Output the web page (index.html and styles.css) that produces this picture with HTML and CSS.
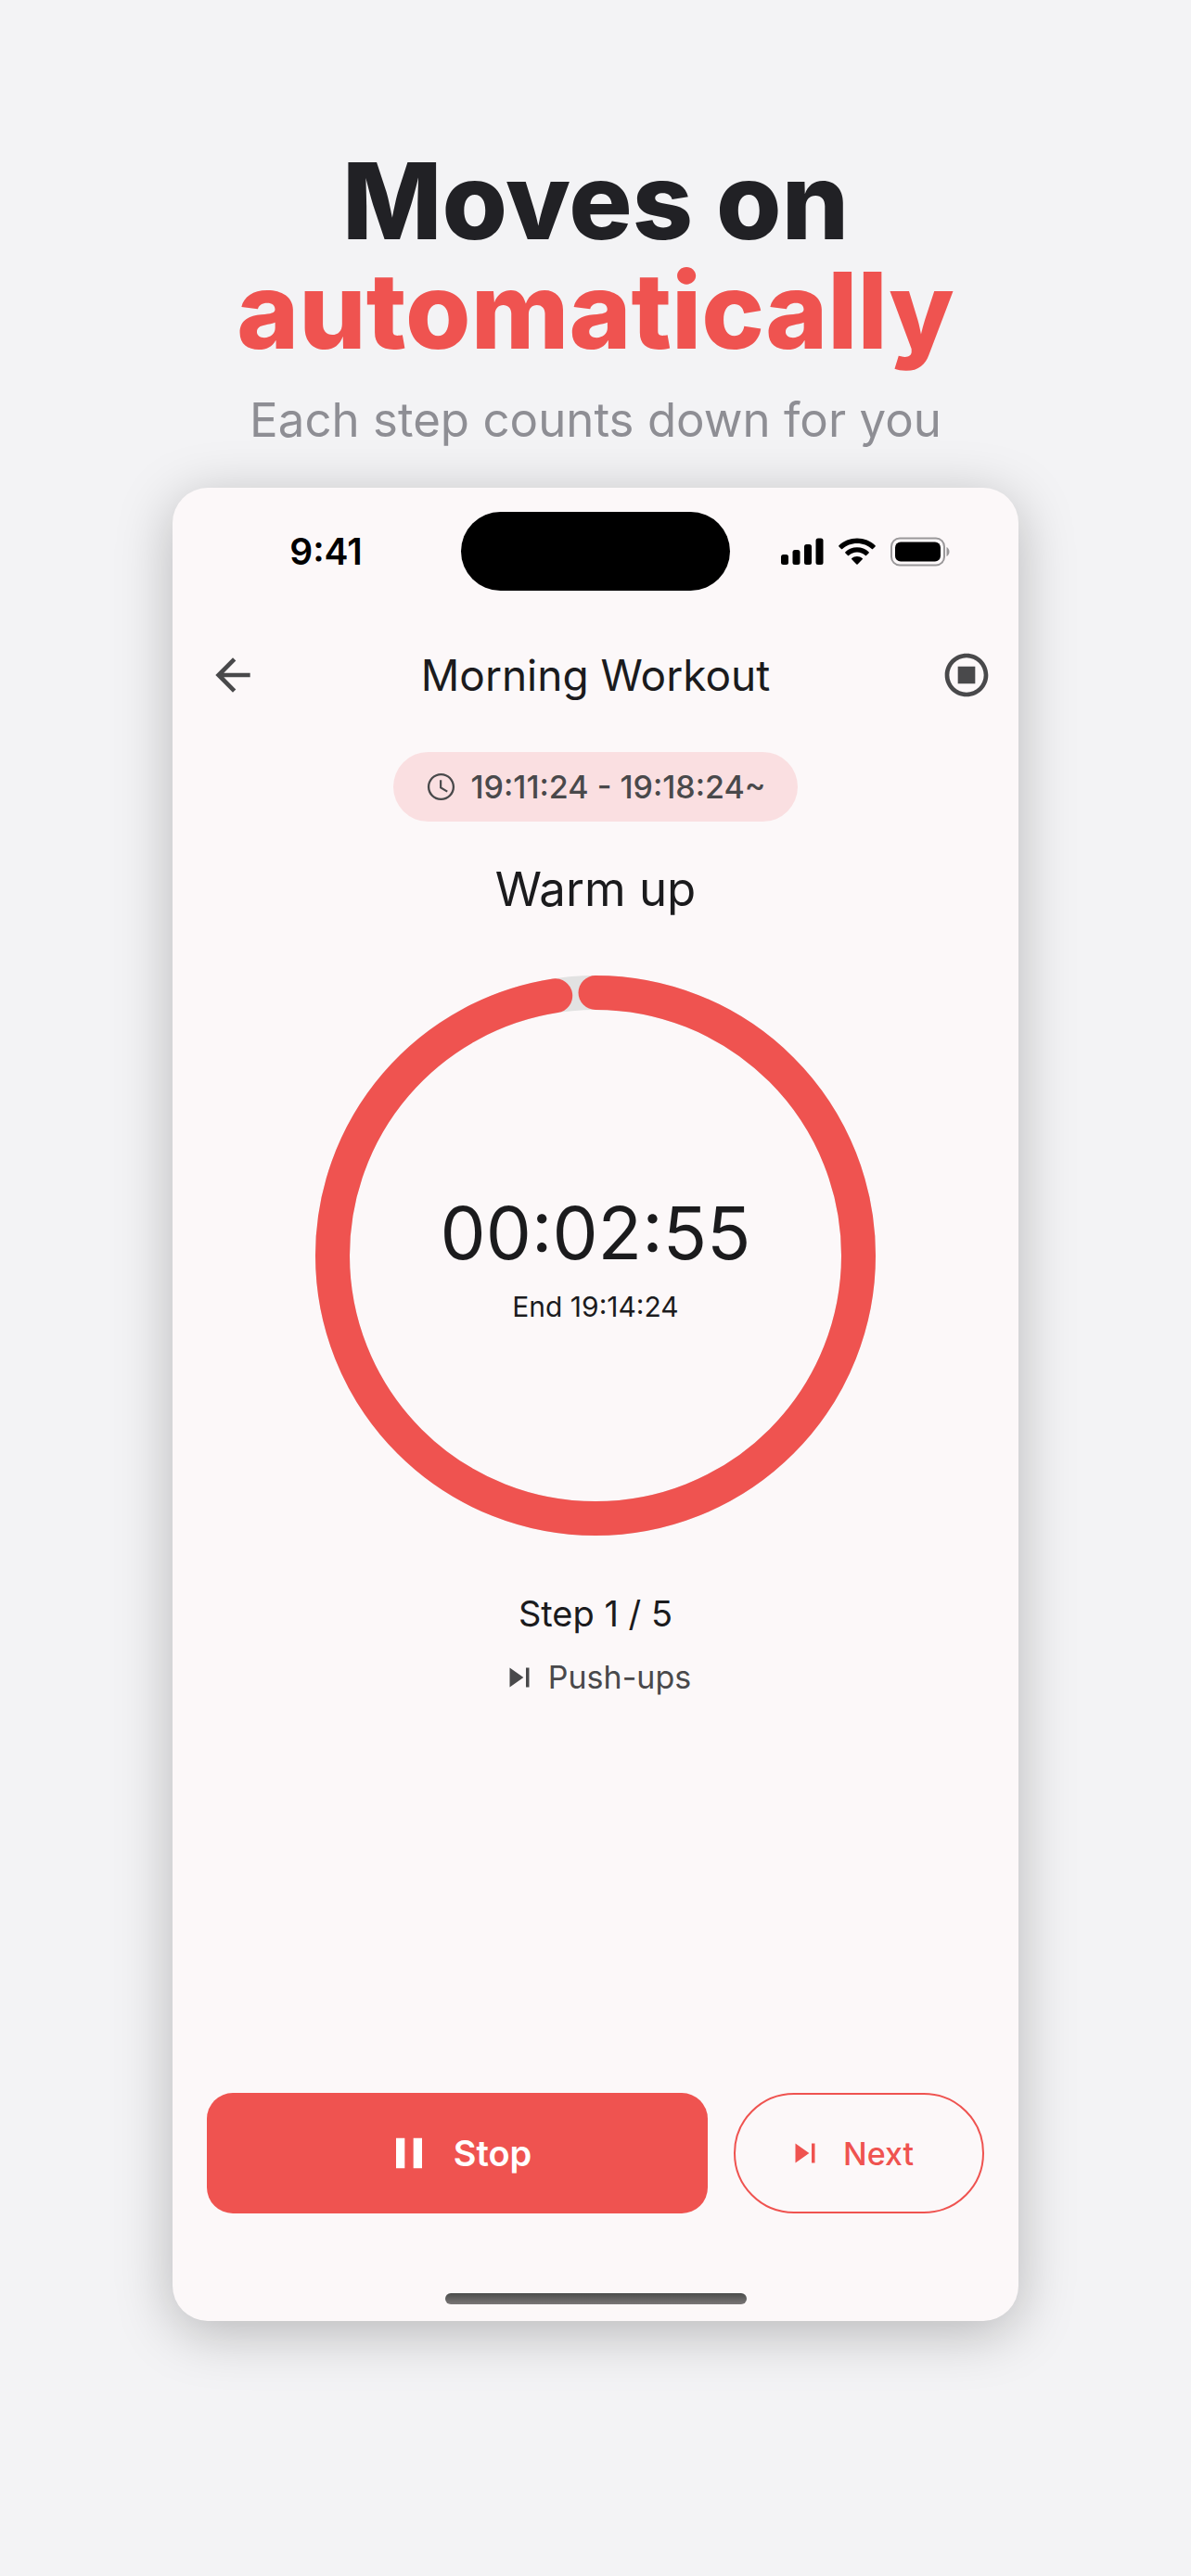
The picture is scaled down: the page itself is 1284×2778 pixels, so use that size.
FILE: index.html
```html
<!DOCTYPE html>
<html lang="en">
<head>
  <meta charset="UTF-8" />
  <meta name="viewport" content="width=device-width, initial-scale=1.0"/>
  <title>Interval Timer</title>
  <link rel="stylesheet" href="styles.css">
</head>
<body>

  <!-- Headline -->
  <header class="headline">
    <h1>Moves on<br><span class="accent">automatically</span></h1>
    <p>Each step counts down for you</p>
  </header>

  <!-- Phone -->
  <main class="phone">

    <!-- Status bar -->
    <div class="status-bar">
      <span class="clock">9:41</span>
      <div class="island"></div>
      <div class="status-icons">
        <svg width="46" height="30" viewBox="0 0 46 30">
          <rect x="0" y="18" width="8" height="11" rx="2.5"/>
          <rect x="12.5" y="13" width="8" height="16" rx="2.5"/>
          <rect x="25" y="7" width="8" height="22" rx="2.5"/>
          <rect x="37.5" y="0.5" width="8" height="28.5" rx="2.5"/>
        </svg>
        <svg width="40" height="30" viewBox="0 0 40 30">
          <path d="M20 0.5C12.300 0.5 5.200 3.500 0.400 8.300a.8.8 0 0 0 0 1.100l2.600 2.600a.8.8 0 0 0 1.100 0C8.200 8.100 13.800 5.900 20 5.900s11.800 2.200 15.900 6.100a.8.8 0 0 0 1.100 0l2.600-2.600a.8.8 0 0 0 0-1.100C34.800 3.500 27.700 0.500 20 0.500z"/>
          <path d="M20 10.300c-4.900 0-9.300 1.900-12.600 4.900a.8.8 0 0 0 0 1.200l2.600 2.600a.8.8 0 0 0 1.100 0c2.400-2.100 5.500-3.400 8.900-3.400s6.500 1.300 8.900 3.400a.8.8 0 0 0 1.100 0l2.600-2.600a.8.8 0 0 0 0-1.200c-3.300-3-7.700-4.900-12.600-4.900z"/>
          <path d="M20 20c-2.200 0-4.200.8-5.700 2.100a.8.8 0 0 0 0 1.200l5.100 5.200a.8.8 0 0 0 1.200 0l5.100-5.200a.8.8 0 0 0 0-1.200C24.200 20.800 22.200 20 20 20z"/>
        </svg>
        <svg width="64" height="32" viewBox="0 0 64 32">
          <rect x="1" y="1.500" width="57" height="29" rx="9" fill="none" stroke="#9a989a" stroke-width="2"/>
          <rect x="5" y="5.500" width="49" height="21" rx="6"/>
          <path d="M60.500 11v10c1.700-.8 3-2.700 3-5s-1.300-4.200-3-5z" fill="#9a989a"/>
        </svg>
      </div>
    </div>

    <!-- App bar -->
    <div class="app-bar">
      <button type="button" class="icon-button back" aria-label="Back">
        <svg width="56" height="56" viewBox="0 0 24 24"><path d="M20 11H7.830l5.590-5.590L12 4l-8 8 8 8 1.410-1.410L7.830 13H20v-2z"/></svg>
      </button>
      <h2>Morning Workout</h2>
      <button type="button" class="icon-button finish" aria-label="Finish workout">
        <svg width="56" height="56" viewBox="0 0 24 24"><path d="M12 2C6.480 2 2 6.480 2 12s4.480 10 10 10 10-4.480 10-10S17.520 2 12 2zm0 18c-4.420 0-8-3.580-8-8s3.580-8 8-8 8 3.580 8 8-3.580 8-8 8zM8 8h8v8H8z"/></svg>
      </button>
    </div>

    <!-- Current step -->
    <section class="session">
      <div class="time-chip">
        <svg width="35" height="35" viewBox="0 0 24 24"><path d="M11.990 2C6.470 2 2 6.480 2 12s4.470 10 9.990 10C17.520 22 22 17.520 22 12S17.520 2 11.990 2zM12 20.400c-4.640 0-8.400-3.760-8.400-8.400s3.760-8.400 8.400-8.400 8.400 3.760 8.400 8.400-3.760 8.400-8.400 8.400zM12.500 7H11v6l5.250 3.150.75-1.230-4.500-2.670z"/></svg>
        <span>19:11:24 - 19:18:24~</span>
      </div>

      <h3>Warm up</h3>

      <div class="ring">
        <svg class="ring-dial" viewBox="0 0 604 604">
          <circle class="ring-track" cx="302" cy="302" r="283.500"/>
          <circle class="ring-progress" cx="302" cy="302" r="283.500" pathLength="360" stroke-dasharray="351.200 360" transform="rotate(-90 302 302)"/>
        </svg>
        <div class="ring-label">
          <span class="remaining">00:02:55</span>
          <span class="end-time">End 19:14:24</span>
        </div>
      </div>

      <p class="step-count">Step 1 / 5</p>
      <p class="next-step">
        <svg width="42" height="42" viewBox="0 0 24 24"><path d="M6 18l8.500-6L6 6v12zM16 6v12h2V6h-2z"/></svg>
        <span>Push-ups</span>
      </p>
    </section>

    <!-- Controls -->
    <div class="actions">
      <button type="button" class="btn btn-stop">
        <svg width="56" height="56" viewBox="0 0 24 24"><path d="M6 19h4V5H6v14zm8-14v14h4V5h-4z"/></svg>
        Stop
      </button>
      <button type="button" class="btn btn-next">
        <svg width="42" height="42" viewBox="0 0 24 24"><path d="M6 18l8.500-6L6 6v12zM16 6v12h2V6h-2z"/></svg>
        Next
      </button>
    </div>

    <div class="home-indicator"></div>
  </main>

</body>
</html>
```
FILE: styles.css
```css
* {
  box-sizing: border-box;
}
body {
  margin: 0;
  min-height: 100vh;
  padding: 158px 24px 40px;
  font-family: Inter, "Liberation Sans", sans-serif;
  background-color: #f3f3f5;
  color: #1b1b1d;
}

h1, h2, h3, p {
  margin: 0;
}

svg {
  display: block;
  flex: none;
  fill: currentColor;
}

button {
  font-family: inherit;
  border: none;
  background: none;
  padding: 0;
  cursor: pointer;
}

/* Headline */
.headline {
  text-align: center;
}
.headline h1 {
  font-size: 114px;
  line-height: 118px;
  font-weight: 800;
  color: #212125;
}
.headline .accent {
  color: #ef5350;
}
.headline p {
  margin-top: 28px;
  font-size: 51px;
  line-height: 62px;
  color: #8e8e94;
}

/* Phone */
.phone {
  max-width: 912px;
  margin: 42px auto 0;
  padding: 26px 0 18px;
  background-color: #fcf8f9;
  border-radius: 38px;
  box-shadow: 0 12px 60px rgba(0,0,0,0.25);
}

.status-bar {
  display: grid;
  grid-template-columns: 1fr 290px 1fr;
  align-items: center;
  padding: 0 20px;
  color: #000;
}
.clock {
  text-align: center;
  font-size: 39px;
  line-height: 48px;
  font-weight: 600;
}
.island {
  height: 85px;
  background-color: #000;
  border-radius: 43px;
}
.status-icons {
  display: flex;
  justify-content: center;
  align-items: center;
  gap: 16px;
}

.app-bar {
  display: grid;
  grid-template-columns: 1fr auto 1fr;
  align-items: center;
  height: 88px;
  margin-top: 47px;
  padding: 0 28px;
}
.app-bar h2 {
  font-size: 46px;
  font-weight: 400;
}
.icon-button {
  display: flex;
  justify-content: center;
  color: #49494b;
}
.back {
  width: 74px;
}
.finish {
  justify-self: end;
}

/* Current step */
.session {
  display: flex;
  flex-direction: column;
  align-items: center;
  padding: 39px 28px 0;
}
.time-chip {
  display: flex;
  align-items: center;
  gap: 14px;
  height: 75px;
  padding: 0 34px;
  border-radius: 38px;
  background-color: #fadfe1;
  color: #49494b;
  font-size: 34px;
  font-weight: 500;
}
.session h3 {
  margin-top: 37px;
  font-size: 51px;
  line-height: 72px;
  font-weight: 400;
}

.ring {
  display: grid;
  place-items: center;
  width: 100%;
  max-width: 604px;
  margin-top: 57px;
}
.ring-dial, .ring-label {
  grid-area: 1 / 1;
}
.ring-dial {
  width: 100%;
}
.ring-track, .ring-progress {
  fill: none;
  stroke-width: 37;
}
.ring-track {
  stroke: #e2e2e2;
}
.ring-progress {
  stroke: #ef5350;
  stroke-linecap: round;
}
.ring-label {
  display: flex;
  flex-direction: column;
  align-items: center;
  gap: 14px;
  padding-top: 6px;
}
.remaining {
  font-size: 78px;
  line-height: 90px;
}
.end-time {
  font-size: 30px;
  line-height: 40px;
}

.step-count {
  margin-top: 60px;
  font-size: 38px;
  line-height: 48px;
}
.next-step {
  display: flex;
  align-items: center;
  gap: 10px;
  margin-top: 23px;
  font-size: 34px;
  line-height: 44px;
  color: #49494b;
}

/* Controls */
.actions {
  display: grid;
  grid-template-columns: 2fr 1fr;
  gap: 28px;
  margin-top: 426px;
  padding: 0 37px;
}
.btn {
  display: flex;
  align-items: center;
  justify-content: center;
  gap: 20px;
  height: 130px;
}
.btn-stop {
  border-radius: 28px;
  background-color: #ef5350;
  color: #fff;
  font-size: 38px;
  font-weight: 600;
}
.btn-next {
  padding-right: 20px;
  border: 2px solid #ef5350;
  border-radius: 65px;
  color: #ef5350;
  font-size: 34px;
  font-weight: 500;
}

.home-indicator {
  width: 325px;
  height: 12px;
  margin: 86px auto 0;
  border-radius: 6px;
  background: linear-gradient(#4a4c4b, #7a7677);
}
```
